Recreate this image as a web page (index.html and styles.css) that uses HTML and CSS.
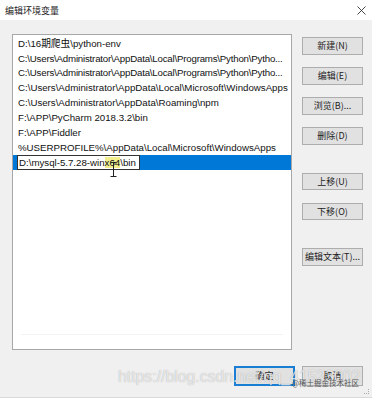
FILE: index.html
```html
<!DOCTYPE html>
<html lang="zh-CN">
<head>
    <meta charset="UTF-8">
    <meta name="viewport" content="width=device-width, initial-scale=1.0">
    <title>编辑环境变量</title>
    <link rel="stylesheet" href="styles.css">
</head>
<body>
    <div class="dialog">
        <!-- Title bar -->
        <header class="titlebar">
            <span class="title">编辑环境变量</span>
            <svg class="close" width="9" height="9" viewBox="0 0 9 9">
                <path d="M0.5 0.5 L8.5 8.5 M8.5 0.5 L0.5 8.5" stroke="#333" stroke-width="0.9" fill="none"/>
            </svg>
        </header>

        <!-- Path list + side buttons -->
        <div class="content">
            <div class="path-list">
                <div class="row">D:\16期爬虫\python-env</div>
                <div class="row tight">C:\Users\Administrator\AppData\Local\Programs\Python\Pytho...</div>
                <div class="row tight">C:\Users\Administrator\AppData\Local\Programs\Python\Pytho...</div>
                <div class="row">C:\Users\Administrator\AppData\Local\Microsoft\WindowsApps</div>
                <div class="row">C:\Users\Administrator\AppData\Roaming\npm</div>
                <div class="row">F:\APP\PyCharm 2018.3.2\bin</div>
                <div class="row">F:\APP\Fiddler</div>
                <div class="row">%USERPROFILE%\AppData\Local\Microsoft\WindowsApps</div>
                <div class="row selected">
                    <div class="edit-box">D:\mysql-5.7.28-win<span class="hl">x64</span>\bin</div>
                    <svg class="ibeam" width="7" height="15" viewBox="0 0 7 15">
                        <path d="M0.5 0.5 H6.5 M3.5 0.5 V14.5 M0.5 14.5 H6.5" stroke="#222" stroke-width="1" fill="none"/>
                    </svg>
                </div>
                <div class="faint-line"></div>
            </div>

            <div class="side">
                <div class="group">
                    <button class="btn">新建(N)</button>
                    <button class="btn">编辑(E)</button>
                    <button class="btn">浏览(B)...</button>
                    <button class="btn">删除(D)</button>
                </div>
                <div class="group">
                    <button class="btn">上移(U)</button>
                    <button class="btn">下移(O)</button>
                </div>
                <div class="group">
                    <button class="btn">编辑文本(T)...</button>
                </div>
            </div>
        </div>

        <!-- Bottom buttons -->
        <footer class="footer">
            <button class="btn default">确定</button>
            <button class="btn">取消</button>
        </footer>

        <div class="grip"></div>

        <!-- watermark over the screenshot -->
        <div class="watermark">https://blog.csdn.net/qq_41523002</div>
        <div class="watermark-small">@稀土掘金技术社区</div>
    </div>
</body>
</html>
```

FILE: styles.css
```css
* {
    margin: 0;
    padding: 0;
    box-sizing: border-box;
}

body {
    width: 372px;
    height: 398px;
    overflow: hidden;
    background: #f0f0f0;
    font-family: "Liberation Sans", "Noto Sans CJK SC", sans-serif;
    color: #000;
}

.dialog {
    position: relative;
    width: 372px;
    height: 398px;
    background: #f0f0f0;
    border-bottom: 1px solid #d9d9d9;
}

.titlebar {
    height: 20px;
    background: #fff;
    display: flex;
    align-items: center;
    justify-content: space-between;
    padding: 0 6px 0 5px;
}

.title {
    font-size: 9px;
    color: #222;
    font-family: "Noto Sans CJK SC", sans-serif;
}

.content {
    display: flex;
    gap: 10px;
    padding: 14px 0 0 12px;
}

.path-list {
    position: relative;
    width: 280px;
    height: 316px;
    background: #fff;
    border: 1px solid #a8a8a8;
    padding-top: 1.7px;
}

.row {
    position: relative;
    height: 14.85px;
    line-height: 14.85px;
    font-size: 9.7px;
    padding-left: 5px;
    white-space: nowrap;
    color: #111;
}

.row.tight {
    letter-spacing: -0.2px;
}

.row.selected {
    background: #0078d7;
    padding-left: 4px;
}

.edit-box {
    width: 123px;
    height: 14.85px;
    line-height: 13px;
    background: #fff;
    border: 1px solid #333;
    padding-left: 1px;
    font-size: 9.7px;
}

.hl {
    background: #f2ee8e;
}

.ibeam {
    position: absolute;
    left: 97px;
    top: 7px;
}

.faint-line {
    position: absolute;
    left: 8px;
    right: 8px;
    top: 299px;
    height: 1px;
    background: #f2f2f2;
}

.side {
    display: flex;
    flex-direction: column;
    gap: 28px;
    padding-top: 3px;
}

.group {
    display: flex;
    flex-direction: column;
    gap: 12.5px;
}

.btn {
    width: 61px;
    height: 17.5px;
    background: #e1e1e1;
    border: 1px solid #adadad;
    font-family: "Noto Sans CJK SC", sans-serif;
    font-size: 9px;
    color: #222;
    display: flex;
    align-items: center;
    justify-content: center;
}

.btn.default {
    border: 2px solid #1a7fd4;
}

.footer {
    display: flex;
    justify-content: flex-end;
    gap: 7px;
    padding: 16px 9px 0 0;
}

.footer .btn {
    height: 19.5px;
}

.grip {
    position: absolute;
    right: 3px;
    bottom: 3px;
    width: 5px;
    height: 5px;
    border-right: 1px dotted #aaa;
    border-bottom: 1px dotted #aaa;
}

.watermark {
    position: absolute;
    left: 118px;
    top: 368px;
    font-family: "Liberation Sans", sans-serif;
    font-size: 15.8px;
    color: rgba(255, 255, 255, 0.7);
    text-shadow: 0 0 1px rgba(130, 130, 130, 0.7);
    white-space: nowrap;
}

.watermark-small {
    position: absolute;
    left: 292px;
    top: 377px;
    font-family: "Noto Sans CJK SC", sans-serif;
    font-size: 7.5px;
    color: #555;
    white-space: nowrap;
}
```
